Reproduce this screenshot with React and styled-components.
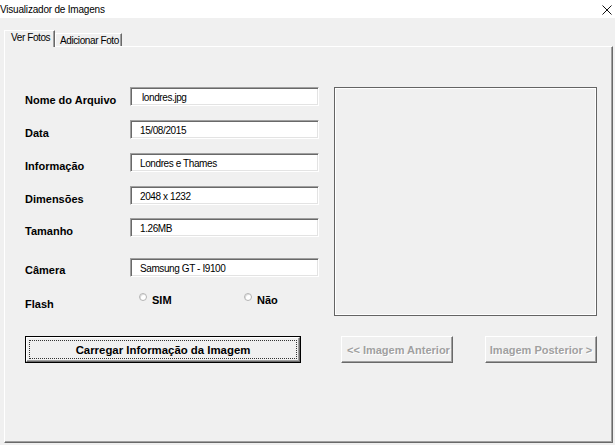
import styled, { createGlobalStyle } from "styled-components";

const GlobalStyle = createGlobalStyle`
  html, body {
    margin: 0;
    padding: 0;
    background: #f0f0f0;
  }
  * {
    box-sizing: border-box;
  }
`;

const Window = styled.div`
  width: 615px;
  height: 445px;
  display: flex;
  flex-direction: column;
  background: #f0f0f0;
  overflow: hidden;
  font-family: "Liberation Sans", Arial, sans-serif;
  color: #000;
`;

const TitleBar = styled.div`
  height: 18px;
  background: #fff;
  display: flex;
  align-items: center;
  justify-content: space-between;
  padding: 0 1px 0 0;
  flex-shrink: 0;
`;

const Title = styled.span`
  font-size: 10px;
  letter-spacing: -0.2px;
  color: #000;
  margin-top: 1px;
`;

const CloseButton = styled.div`
  width: 12px;
  height: 12px;
  display: flex;
  align-items: center;
  justify-content: center;
  margin-right: 1px;
  margin-top: 1px;
`;

const Body = styled.div`
  flex: 1;
  display: flex;
  flex-direction: column;
  padding: 12px 2px 2px 4px;
`;

const TabStrip = styled.div`
  display: flex;
  align-items: flex-end;
  height: 16px;
  position: relative;
  z-index: 2;
`;

const Tab = styled.div`
  height: ${(p) => (p.$active ? "17px" : "13px")};
  margin-bottom: ${(p) => (p.$active ? "-1px" : "0")};
  width: ${(p) => p.$width}px;
  background: #f0f0f0;
  border-top: 1px solid #fff;
  border-left: 1px solid #fff;
  border-right: 1px solid #696969;
  box-shadow: inset -1px 0 0 #a0a0a0;
  font-size: 10px;
  letter-spacing: -0.4px;
  display: flex;
  align-items: center;
  padding-left: ${(p) => (p.$active ? "6px" : "4px")};
  padding-bottom: ${(p) => (p.$active ? "4px" : "0")};
`;

const Panel = styled.div`
  flex: 1;
  border-top: 1px solid #fff;
  border-left: 1px solid #fff;
  border-right: 1px solid #696969;
  border-bottom: 1px solid #696969;
  box-shadow: inset -1px -1px 0 #a0a0a0;
  padding: 40px 0 0 20px;
  display: flex;
  flex-direction: column;
`;

const Content = styled.div`
  display: grid;
  grid-template-columns: 294px 263px;
  column-gap: 15px;
  align-items: start;
`;

const Form = styled.div`
  display: flex;
  flex-direction: column;
`;

const Row = styled.div`
  display: flex;
  align-items: flex-start;
  height: ${(p) => p.$height || 19}px;
  margin-top: ${(p) => p.$gap || 0}px;
`;

const Label = styled.div`
  width: 105px;
  flex-shrink: 0;
  font-size: 11px;
  font-weight: bold;
  line-height: 13px;
  padding-top: ${(p) => p.$drop ?? 7}px;
  color: #000;
`;

const TextBox = styled.div`
  width: 189px;
  height: 19px;
  background: #fff;
  border-top: 1px solid #a0a0a0;
  border-left: 1px solid #a0a0a0;
  border-right: 1px solid #fff;
  border-bottom: 1px solid #fff;
  box-shadow: inset 1px 1px 0 #696969, inset -1px -1px 0 #e3e3e3;
  font-size: 10px;
  letter-spacing: -0.4px;
  display: flex;
  align-items: center;
  padding-left: ${(p) => p.$pad || 9}px;
  padding-top: 1px;
  white-space: nowrap;
`;

const RadioGroup = styled.div`
  display: flex;
  padding-left: 9px;
  padding-top: 2px;
`;

const RadioOption = styled.div`
  width: 105px;
  display: flex;
  align-items: flex-start;
`;

const RadioCircle = styled.span`
  width: 8px;
  height: 8px;
  border-radius: 50%;
  background: #fff;
  border: 1px solid #b4b4b4;
  box-shadow: inset 1px 1px 0 #e0e0e0;
  margin-top: 1px;
  margin-right: 5px;
  flex-shrink: 0;
`;

const RadioText = styled.span`
  font-size: 11px;
  font-weight: bold;
  line-height: 13px;
  margin-top: 2px;
`;

const ImageFrame = styled.div`
  height: 229px;
  border: 1px solid #646464;
  box-shadow: inset 0 0 0 1px #fff;
  background: #f0f0f0;
`;

const ButtonRow = styled.div`
  display: flex;
  margin-top: 20px;
`;

const Button = styled.div`
  width: ${(p) => p.$width}px;
  height: 27px;
  margin-left: ${(p) => p.$offset || 0}px;
  background: #f0f0f0;
  border-top: 1px solid #fff;
  border-left: 1px solid #fff;
  border-right: 1px solid #696969;
  border-bottom: 1px solid #696969;
  box-shadow: inset -1px -1px 0 #a0a0a0;
  font-size: 11px;
  font-weight: bold;
  display: flex;
  align-items: center;
  justify-content: ${(p) => (p.$left ? "flex-start" : "center")};
  padding-left: ${(p) => (p.$left ? "5px" : "0")};
  white-space: nowrap;
  overflow: hidden;
  color: ${(p) => (p.disabled ? "#a0a0a0" : "#000")};
  text-shadow: ${(p) => (p.disabled ? "1px 1px 0 #fff" : "none")};
`;

const DefaultButton = styled.div`
  width: 276px;
  height: 27px;
  border: 1px solid #000;
  background: #f0f0f0;
  padding: 0;
  display: flex;
`;

const Bevel = styled.div`
  flex: 1;
  border-top: 1px solid #fff;
  border-left: 1px solid #fff;
  border-right: 1px solid #696969;
  border-bottom: 1px solid #696969;
  box-shadow: inset -1px -1px 0 #a0a0a0;
  padding: 2px;
  display: flex;
`;

const FocusRect = styled.div`
  flex: 1;
  border: 1px dotted #333;
  display: flex;
  align-items: center;
  justify-content: center;
  font-size: 11.4px;
  font-weight: bold;
  color: #000;
  white-space: nowrap;
`;

const fields = [
  { label: "Nome do Arquivo", value: "londres.jpg", gap: 0, pad: 11 },
  { label: "Data", value: "15/08/2015", gap: 14 },
  { label: "Informação", value: "Londres e Thames", gap: 14 },
  { label: "Dimensões", value: "2048 x 1232", gap: 14 },
  { label: "Tamanho", value: "1.26MB", gap: 13 },
  { label: "Câmera", value: "Samsung GT - I9100", gap: 21, drop: 6 },
];

const App = () => {
  return (
    <>
      <GlobalStyle />
      <Window>
        <TitleBar>
          <Title>Visualizador de Imagens</Title>
          <CloseButton>
            <svg width="10" height="10" viewBox="0 0 10 10">
              <path d="M0.5 0.5 L9.5 9.5 M9.5 0.5 L0.5 9.5" stroke="#111" strokeWidth="1" fill="none" />
            </svg>
          </CloseButton>
        </TitleBar>
        <Body>
          <TabStrip>
            <Tab $active $width={51}>Ver Fotos</Tab>
            <Tab $width={67}>Adicionar Foto</Tab>
          </TabStrip>
          <Panel>
            <Content>
              <Form>
                {fields.map((f) => (
                  <Row key={f.label} $gap={f.gap}>
                    <Label $drop={f.drop}>{f.label}</Label>
                    <TextBox $pad={f.pad}>{f.value}</TextBox>
                  </Row>
                ))}
                <Row $gap={13} $height={22}>
                  <Label $drop={8}>Flash</Label>
                  <RadioGroup>
                    <RadioOption>
                      <RadioCircle />
                      <RadioText>SIM</RadioText>
                    </RadioOption>
                    <RadioOption>
                      <RadioCircle />
                      <RadioText>Não</RadioText>
                    </RadioOption>
                  </RadioGroup>
                </Row>
              </Form>
              <ImageFrame />
            </Content>
            <ButtonRow>
              <DefaultButton>
                <Bevel>
                  <FocusRect>Carregar Informação da Imagem</FocusRect>
                </Bevel>
              </DefaultButton>
              <Button $width={112} $offset={40} $left disabled>
                {"<< Imagem Anterior"}
              </Button>
              <Button $width={112} $offset={32} disabled>
                {"Imagem Posterior >"}
              </Button>
            </ButtonRow>
          </Panel>
        </Body>
      </Window>
    </>
  );
};

export default App;
